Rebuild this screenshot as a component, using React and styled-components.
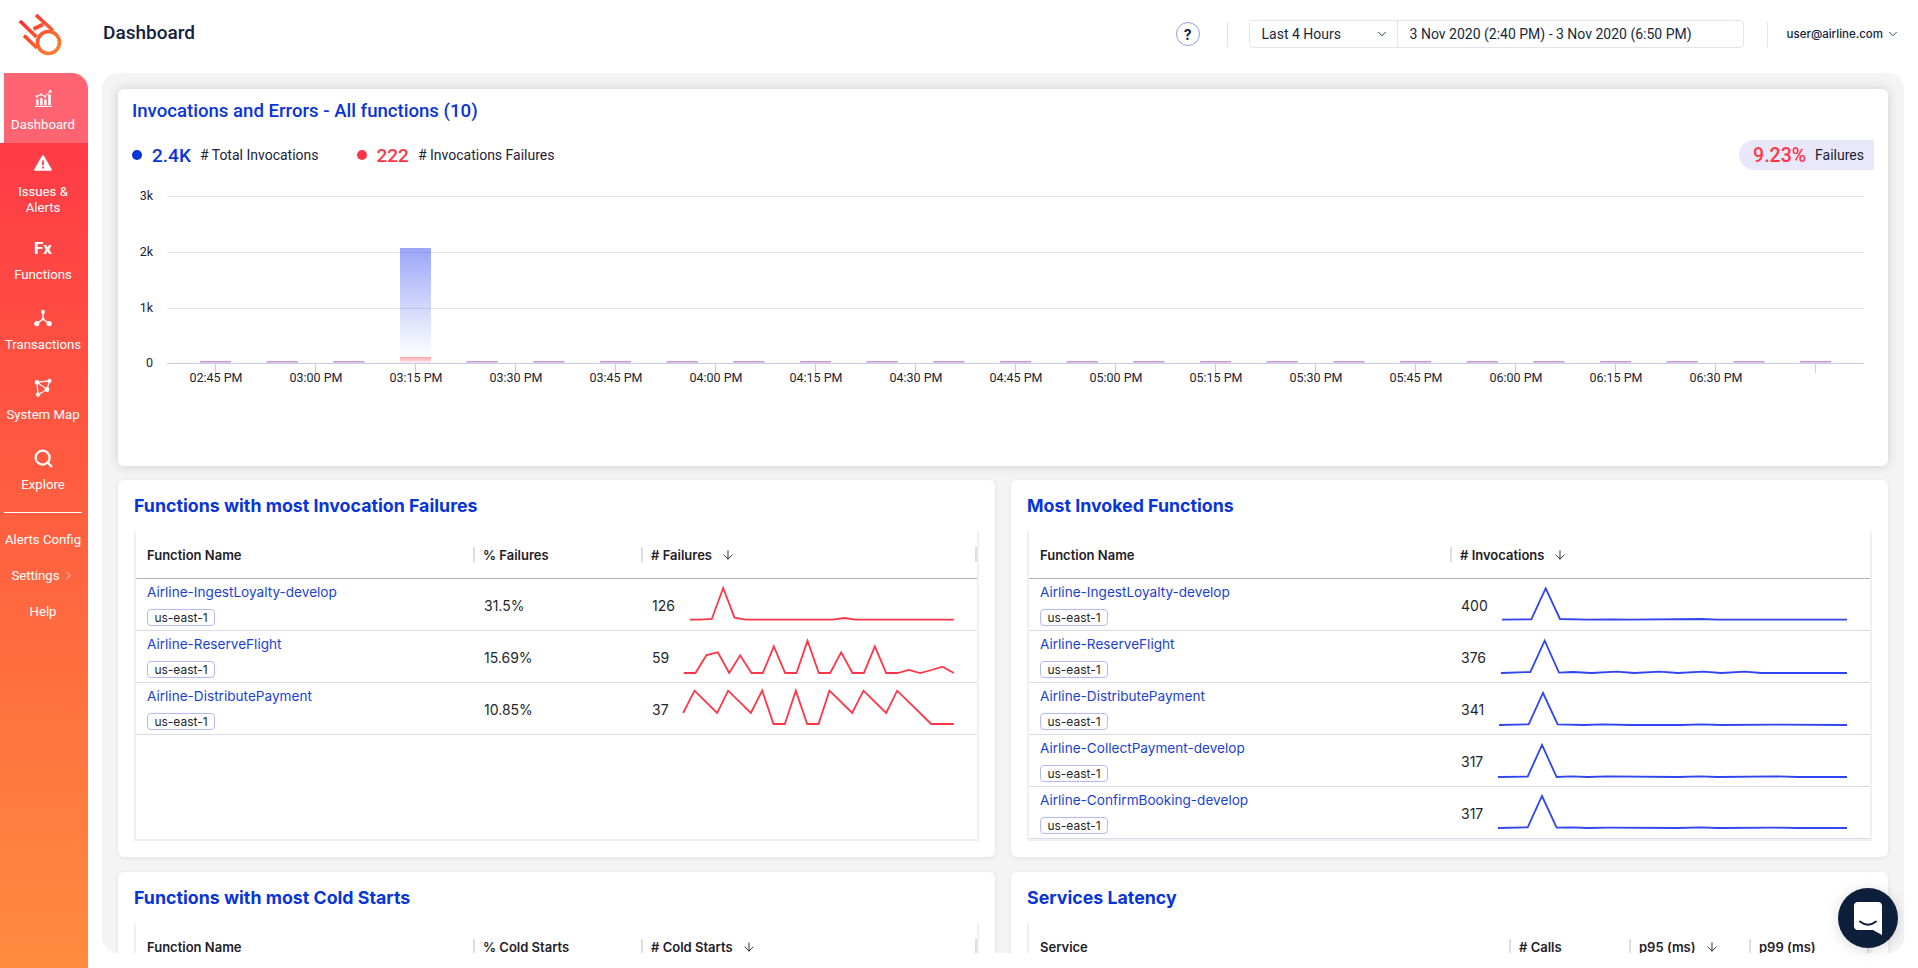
import React from "react";
import styled, { createGlobalStyle } from "styled-components";
import { ArrowDown, ChevronDown, ChevronRight, Search } from "lucide-react";

const display = `Roboto, "Noto Sans", sans-serif`;
const body = `Inter, "Noto Sans", sans-serif`;
const BLUE = "#0a35d6";
const RED = "#ff3648";

const GlobalStyle = createGlobalStyle`
  html, body {
    margin: 0;
    height: 100%;
    overflow: hidden;
    background: #fff;
    font-family: ${body};
  }
  * { box-sizing: border-box; }
`;

const Page = styled.div`
  display: flex;
  flex-direction: column;
  height: 100vh;
`;

const Header = styled.header`
  display: flex;
  align-items: center;
  flex: 0 0 73px;
  padding: 0 18px 5px 0;
`;

const LogoBox = styled.div`
  align-self: flex-start;
  width: 103px;
  height: 68px;
  flex: none;
`;

const PageTitle = styled.h1`
  flex: 1;
  margin: 0 0 4px;
  font: 500 19px ${display};
  color: #10223f;
`;

const HelpButton = styled.div`
  width: 24px;
  height: 24px;
  margin-right: 27px;
  border: 1px solid #8ea0d8;
  border-radius: 50%;
  display: flex;
  align-items: center;
  justify-content: center;
  font-size: 14px;
  font-weight: 700;
  color: #10223f;
`;

const VLine = styled.div`
  width: 1px;
  height: 25px;
  background: #e3e4ea;
`;

const RangeBox = styled.div`
  display: flex;
  width: 495px;
  height: 28px;
  margin: 0 23px 0 21px;
  border: 1px solid #e4e5ec;
  border-radius: 4px;
  font: 400 14px ${display};
  color: #15283d;
`;

const RangeSelect = styled.div`
  display: flex;
  align-items: center;
  justify-content: space-between;
  width: 148px;
  padding: 0 8px 0 12px;
  border-right: 1px solid #e4e5ec;
`;

const RangeDates = styled.div`
  display: flex;
  align-items: center;
  padding-left: 12px;
`;

const UserMenu = styled.div`
  display: flex;
  align-items: center;
  gap: 3px;
  margin-left: 19px;
  font-size: 11.5px;
  font-weight: 500;
  color: #10223f;
`;

const Body = styled.div`
  display: flex;
  flex: 1;
  min-height: 0;
`;

const Sidebar = styled.nav`
  display: flex;
  flex-direction: column;
  flex: 0 0 88px;
`;

const ActiveItem = styled.div`
  flex: 0 0 70px;
  margin-left: 4px;
  padding: 13px 6px 0 0;
  border-top-right-radius: 16px;
  background: #ff6472;
  display: flex;
  flex-direction: column;
  align-items: center;
`;

const SideRest = styled.div`
  flex: 1;
  padding-right: 2px;
  background: linear-gradient(180deg, #ff3b46 0%, #ff5b40 40%, #ff8c3e 100%);
`;

const NavItem = styled.div`
  height: ${(p) => p.$h || 70}px;
  padding-top: ${(p) => p.$top || 13}px;
  display: flex;
  flex-direction: column;
  align-items: center;
`;

const IconBox = styled.div`
  height: 24px;
  display: flex;
  align-items: center;
  justify-content: center;
  color: #fff;
`;

const FxGlyph = styled.span`
  font: 700 17px ${display};
`;

const NavLabel = styled.div`
  margin-top: ${(p) => p.$gap || 7}px;
  font: 400 13.2px/15.5px ${display};
  color: #fff;
  text-align: center;
  white-space: pre-line;
`;

const SideRule = styled.div`
  height: 1px;
  margin: 9px 4px 8px 4px;
  background: #fff;
`;

const SideLink = styled.div`
  height: 36px;
  display: flex;
  align-items: center;
  justify-content: center;
  gap: 2px;
  font: 400 13.2px ${display};
  color: #fff;
`;

const MainWrap = styled.main`
  flex: 1;
  min-width: 0;
  padding: 0 14px 15px;
`;

const Panel = styled.div`
  height: 100%;
  padding: 16px;
  overflow: hidden;
  border-radius: 16px;
  background: #f4f4f5;
`;

const Card = styled.section`
  height: 377px;
  border-radius: 6px;
  background: #fff;
  box-shadow: ${(p) => (p.$strong ? "0 0 12px rgba(0,0,0,.16)" : "0 1px 5px rgba(20,30,60,.08)")};
`;

const ChartTitle = styled.h2`
  margin: 0;
  padding: 11px 14px 0;
  font: 500 18.6px/22px ${display};
  color: ${BLUE};
`;

const LegendRow = styled.div`
  display: flex;
  align-items: center;
  height: 32px;
  margin-top: 17px;
  padding-left: 14px;
  padding-right: 14px;
`;

const Dot = styled.span`
  width: 10px;
  height: 10px;
  margin-right: 10px;
  border-radius: 50%;
  background: ${(p) => p.$color};
`;

const LegendValue = styled.span`
  margin-right: 9px;
  font: 500 19px ${display};
  color: ${(p) => p.$color};
`;

const LegendLabel = styled.span`
  margin-right: ${(p) => (p.$flush ? 0 : 38)}px;
  font: 400 14px ${display};
  color: #1b2238;
`;

const FailBadge = styled.div`
  display: flex;
  align-items: center;
  gap: 9px;
  height: 30px;
  margin-left: auto;
  padding: 0 10px 0 14px;
  border-radius: 15px 0 0 15px;
  background: #e8e8fa;
`;

const FailValue = styled.span`
  font: 500 19.5px ${display};
  color: ${RED};
`;

const ChartSvg = styled.svg`
  display: block;
  width: 100%;
  height: 225px;
  text {
    font: 400 12.5px ${display};
    fill: #1c2233;
  }
`;

const TwoCols = styled.div`
  display: grid;
  grid-template-columns: 877px 877px;
  gap: 15px 16px;
  margin-top: 14px;
`;

const TableTitle = styled.h3`
  margin: 0;
  padding: 15px 16px 0;
  font: 700 17.8px/22px ${body};
  color: ${BLUE};
`;

const Table = styled.div`
  height: 310px;
  margin: 14px 16px 0;
  border-left: 2px solid #f0f0f2;
  border-right: 2px solid #f0f0f2;
  border-bottom: 2px solid #f0f0f2;
`;

const HeadRow = styled.div`
  display: grid;
  grid-template-columns: ${(p) => p.$cols};
  align-items: center;
  height: 48px;
  border-bottom: 1px solid #b0b1ba;
`;

const HeadCell = styled.div`
  display: flex;
  align-items: center;
  gap: 9px;
  height: 15px;
  padding-left: ${(p) => (p.$first ? 11 : 8)}px;
  border-left: ${(p) => (p.$first ? "none" : "2px solid #dcdde2")};
  border-right: ${(p) => (p.$last ? "2px solid #dcdde2" : "none")};
  font-size: 13px;
  font-weight: 600;
  color: #1f2128;
`;

const Row = styled.div`
  display: grid;
  grid-template-columns: ${(p) => p.$cols};
  height: 52px;
  border-bottom: 1px solid #d8dbe8;
`;

const NameCell = styled.div`
  padding: 4px 0 0 11px;
`;

const FnLink = styled.a`
  display: block;
  font-size: 13.6px;
  line-height: 18px;
  color: #1a3fd6;
`;

const Pill = styled.span`
  display: inline-flex;
  align-items: center;
  justify-content: center;
  width: 68px;
  height: 17px;
  margin-top: 8px;
  border: 1px solid #b3baf5;
  border-radius: 4px;
  font-size: 12px;
  color: #24262d;
`;

const ValueCell = styled.div`
  display: flex;
  align-items: center;
  padding-left: 11px;
  font-size: 14px;
  color: #24262d;
`;

const Count = styled.span`
  flex: 0 0 ${(p) => p.$w}px;
  font-size: 14px;
`;

const SparkSvg = styled.svg`
  display: block;
  flex: none;
  width: ${(p) => p.$w}px;
  height: 52px;
  overflow: visible;
`;

const ChatButton = styled.div`
  position: fixed;
  right: 20px;
  bottom: 20px;
  width: 60px;
  height: 60px;
  border-radius: 50%;
  background: #0e1f3c;
  display: flex;
  align-items: center;
  justify-content: center;
  box-shadow: 0 2px 14px rgba(0, 0, 0, 0.15);
`;

function Logo() {
  return (
    <svg width="68" height="68" viewBox="0 0 68 68" fill="none">
      <defs>
        <linearGradient id="logoGrad" x1="18" y1="14" x2="60" y2="56" gradientUnits="userSpaceOnUse">
          <stop offset="0" stopColor="#ff1f2f" />
          <stop offset="1" stopColor="#ff8a2e" />
        </linearGradient>
      </defs>
      <g stroke="url(#logoGrad)" strokeWidth="3.6">
        <circle cx="48.5" cy="42.5" r="11" />
        <path d="M20 21L36.5 37M36 15L53 30.5M24 35.5L37 48M33.5 29L43 24.5" />
      </g>
    </svg>
  );
}

const DashboardIcon = () => (
  <svg width="17" height="17" viewBox="0 0 17 17" fill="#fff">
    <rect x="0" y="15.8" width="17" height="1.2" />
    <rect x="1.2" y="9.5" width="2.4" height="5.5" />
    <rect x="5.2" y="8" width="2.4" height="7" />
    <rect x="9.2" y="9.5" width="2.4" height="5.5" />
    <rect x="13.2" y="4.5" width="2.6" height="10.5" />
    <path d="M2 6.4L6 4.4L10 6.6L15 1.4" stroke="#fff" strokeWidth="1" fill="none" />
    <circle cx="2" cy="6.4" r="1.2" />
    <circle cx="6" cy="4.4" r="1.2" />
    <circle cx="10" cy="6.6" r="1.2" />
    <circle cx="15.2" cy="1.4" r="1.3" />
  </svg>
);

const WarningIcon = () => (
  <svg width="18" height="16" viewBox="0 0 18 16">
    <path
      fillRule="evenodd"
      fill="#fff"
      d="M9 0.3C9.5 0.3 9.9 0.6 10.1 1L17.7 14.2C18.1 15 17.6 15.8 16.8 15.8H1.2C0.4 15.8 -0.1 15 0.3 14.2L7.9 1C8.1 0.6 8.5 0.3 9 0.3ZM8.1 5.5V10.3H9.9V5.5ZM8.1 11.6V13.4H9.9V11.6Z"
    />
  </svg>
);

const TransactionsIcon = () => (
  <svg width="18" height="18" viewBox="0 0 18 18" fill="#fff" stroke="#fff">
    <path d="M9 3V10M9 10L3 14.5M9 10L15 14.5" strokeWidth="1.4" fill="none" />
    <circle cx="9" cy="2.8" r="2" strokeWidth="0" />
    <circle cx="9" cy="10" r="1.4" strokeWidth="0" />
    <circle cx="2.8" cy="14.6" r="2.6" strokeWidth="0" />
    <circle cx="15.2" cy="14.6" r="2.6" strokeWidth="0" />
  </svg>
);

const SystemMapIcon = () => (
  <svg width="18" height="18" viewBox="0 0 18 18" fill="#fff" stroke="#fff">
    <path d="M3 3.2L15.5 1.8M3 3.2L13 10.5M3 3.2L4 15.8L13 10.5M15.5 1.8L13 10.5" strokeWidth="1.2" fill="none" />
    <circle cx="3" cy="3.2" r="2.3" strokeWidth="0" />
    <circle cx="15.5" cy="1.9" r="2" strokeWidth="0" />
    <circle cx="13" cy="10.5" r="2.4" strokeWidth="0" />
    <circle cx="4" cy="15.6" r="2.2" strokeWidth="0" />
  </svg>
);

const ChatIcon = () => (
  <svg width="28" height="33" viewBox="0 0 28 33">
    <path d="M3.5 0H24.5C26.4 0 28 1.6 28 3.5V33L19 28H3.5C1.6 28 0 26.4 0 24.5V3.5C0 1.6 1.6 0 3.5 0Z" fill="#fff" />
    <path d="M6 19.5C11 23.5 17 23.5 22 19.5" stroke="#0e1f3c" strokeWidth="1.8" fill="none" strokeLinecap="round" />
  </svg>
);

const tickLabels = [
  "02:45 PM", "03:00 PM", "03:15 PM", "03:30 PM", "03:45 PM", "04:00 PM", "04:15 PM", "04:30 PM",
  "04:45 PM", "05:00 PM", "05:15 PM", "05:30 PM", "05:45 PM", "06:00 PM", "06:15 PM", "06:30 PM",
];

function InvocationsChart() {
  const base = 192;
  return (
    <ChartSvg viewBox="0 0 1770 225">
      <defs>
        <linearGradient id="bigBar" x1="0" y1="0" x2="0" y2="1">
          <stop offset="0" stopColor="#3f55f0" stopOpacity=".52" />
          <stop offset="1" stopColor="#3f55f0" stopOpacity="0" />
        </linearGradient>
        <linearGradient id="redBar" x1="0" y1="0" x2="0" y2="1">
          <stop offset="0" stopColor="#ff4a58" stopOpacity=".5" />
          <stop offset="1" stopColor="#ff4a58" stopOpacity=".08" />
        </linearGradient>
      </defs>
      {[[25, "3k"], [81, "2k"], [137, "1k"], [base, "0"]].map(([y, t]) => (
        <g key={t}>
          <line x1="49" x2="1746" y1={y + 0.5} y2={y + 0.5} stroke={t === "0" ? "#c5cbe5" : "#e2e3e7"} />
          <text x="35" y={y + 4} textAnchor="end">{t}</text>
        </g>
      ))}
      {Array.from({ length: 17 }, (_, i) => (
        <g key={i}>
          <line x1={97.5 + i * 100} x2={97.5 + i * 100} y1={base} y2={base + 10} stroke="#c5cbe5" />
          {tickLabels[i] && <text x={98 + i * 100} y={base + 19} textAnchor="middle">{tickLabels[i]}</text>}
        </g>
      ))}
      {Array.from({ length: 25 }, (_, i) =>
        i === 3 ? null : (
          <g key={i}>
            <rect x={82 + i * 66.67} y={base - 2} width="31" height="2" fill="#e0c8e8" />
            <rect x={82 + i * 66.67} y={base - 2} width="31" height="1" fill="#cc93c6" />
          </g>
        )
      )}
      <rect x="282" y="77" width="31" height="108" fill="url(#bigBar)" />
      <rect x="282" y="186" width="31" height="6" fill="url(#redBar)" />
    </ChartSvg>
  );
}

function Spark({ points, color, width, vbw }) {
  return (
    <SparkSvg $w={width} viewBox={`0 0 ${vbw} 156`}>
      <polyline points={points} fill="none" stroke={color} strokeWidth="5.4" strokeLinejoin="miter" />
    </SparkSvg>
  );
}

const failureRows = [
  {
    name: "Airline-IngestLoyalty-develop", pct: "31.5%", count: "126",
    spark: "20,122 52,122 86,120 120,27 154,116 187,122 449,122 483,117 517,122 812,122",
  },
  {
    name: "Airline-ReserveFlight", pct: "15.69%", count: "59",
    spark: "2,126 37,126 70,72 104,64 138,126 171,73 205,126 239,126 272,46 306,126 340,126 373,29 407,126 441,126 474,64 508,126 542,126 575,46 609,126 643,126 677,117 711,126 745,117 778,107 812,126",
  },
  {
    name: "Airline-DistributePayment", pct: "10.85%", count: "37",
    spark: "0,90 34,23 102,90 135,23 203,90 237,23 271,123 305,123 338,23 372,123 406,123 439,23 507,90 541,23 609,90 642,23 744,123 812,123",
  },
];

const invokedRows = [
  {
    name: "Airline-IngestLoyalty-develop", count: "400",
    spark: "12,122 100,121 143,28 186,120 270,122 340,121 400,122 610,120 660,122 1047,122",
  },
  {
    name: "Airline-ReserveFlight", count: "376",
    spark: "9,126 97,123 140,29 183,125 225,123 280,126 355,122 410,126 485,122 540,126 615,122 670,126 740,122 790,126 1047,126",
  },
  {
    name: "Airline-DistributePayment", count: "341",
    spark: "3,126 92,124 135,30 179,124 260,126 310,124 400,126 550,126 610,124 670,126 830,125 1047,126",
  },
  {
    name: "Airline-CollectPayment-develop", count: "317",
    spark: "0,126 89,125 132,30 176,126 220,124 270,126 330,124 540,126 605,124 660,126 830,124 900,126 1047,126",
  },
  {
    name: "Airline-ConfirmBooking-develop", count: "317",
    spark: "0,123 89,121 132,27 176,122 220,121 270,123 330,122 540,123 605,121 660,123 830,122 900,123 1047,123",
  },
];

const LEFT_COLS = "337px 168px 1fr";
const RIGHT_COLS = "421px 1fr";
const LATENCY_COLS = "480px 120px 120px 120px";

const Sorted = ({ children }) => (
  <>
    {children}
    <ArrowDown size={14} strokeWidth={1.6} />
  </>
);

const Function = ({ name }) => (
  <NameCell>
    <FnLink>{name}</FnLink>
    <Pill>us-east-1</Pill>
  </NameCell>
);

export default function App() {
  return (
    <Page>
      <GlobalStyle />
      <Header>
        <LogoBox>
          <Logo />
        </LogoBox>
        <PageTitle>Dashboard</PageTitle>
        <HelpButton>?</HelpButton>
        <VLine />
        <RangeBox>
          <RangeSelect>
            Last 4 Hours
            <ChevronDown size={14} strokeWidth={1.5} />
          </RangeSelect>
          <RangeDates>3 Nov 2020 (2:40 PM) - 3 Nov 2020 (6:50 PM)</RangeDates>
        </RangeBox>
        <VLine />
        <UserMenu>
          user@airline.com
          <ChevronDown size={14} strokeWidth={1.4} />
        </UserMenu>
      </Header>

      <Body>
        <Sidebar>
          <ActiveItem>
            <IconBox><DashboardIcon /></IconBox>
            <NavLabel>Dashboard</NavLabel>
          </ActiveItem>
          <SideRest>
            <NavItem $h={80} $top={8}>
              <IconBox><WarningIcon /></IconBox>
              <NavLabel $gap={9}>{"Issues &\nAlerts"}</NavLabel>
            </NavItem>
            <NavItem>
              <IconBox><FxGlyph>Fx</FxGlyph></IconBox>
              <NavLabel>Functions</NavLabel>
            </NavItem>
            <NavItem>
              <IconBox><TransactionsIcon /></IconBox>
              <NavLabel>Transactions</NavLabel>
            </NavItem>
            <NavItem>
              <IconBox><SystemMapIcon /></IconBox>
              <NavLabel>System Map</NavLabel>
            </NavItem>
            <NavItem>
              <IconBox><Search size={21} strokeWidth={2.5} /></IconBox>
              <NavLabel>Explore</NavLabel>
            </NavItem>
            <SideRule />
            <SideLink>Alerts Config</SideLink>
            <SideLink>
              Settings
              <ChevronRight size={13} strokeWidth={1.5} />
            </SideLink>
            <SideLink>Help</SideLink>
          </SideRest>
        </Sidebar>

        <MainWrap>
          <Panel>
            <Card $strong>
              <ChartTitle>Invocations and Errors - All functions (10)</ChartTitle>
              <LegendRow>
                <Dot $color={BLUE} />
                <LegendValue $color={BLUE}>2.4K</LegendValue>
                <LegendLabel># Total Invocations</LegendLabel>
                <Dot $color={RED} />
                <LegendValue $color={RED}>222</LegendValue>
                <LegendLabel># Invocations Failures</LegendLabel>
                <FailBadge>
                  <FailValue>9.23%</FailValue>
                  <LegendLabel $flush>Failures</LegendLabel>
                </FailBadge>
              </LegendRow>
              <InvocationsChart />
            </Card>

            <TwoCols>
              <Card>
                <TableTitle>Functions with most Invocation Failures</TableTitle>
                <Table>
                  <HeadRow $cols={LEFT_COLS}>
                    <HeadCell $first>Function Name</HeadCell>
                    <HeadCell>% Failures</HeadCell>
                    <HeadCell $last><Sorted># Failures</Sorted></HeadCell>
                  </HeadRow>
                  {failureRows.map((r) => (
                    <Row key={r.name} $cols={LEFT_COLS}>
                      <Function name={r.name} />
                      <ValueCell>{r.pct}</ValueCell>
                      <ValueCell>
                        <Count $w={31}>{r.count}</Count>
                        <Spark points={r.spark} color={RED} width={271} vbw={812} />
                      </ValueCell>
                    </Row>
                  ))}
                </Table>
              </Card>

              <Card>
                <TableTitle>Most Invoked Functions</TableTitle>
                <Table>
                  <HeadRow $cols={RIGHT_COLS}>
                    <HeadCell $first>Function Name</HeadCell>
                    <HeadCell><Sorted># Invocations</Sorted></HeadCell>
                  </HeadRow>
                  {invokedRows.map((r) => (
                    <Row key={r.name} $cols={RIGHT_COLS}>
                      <Function name={r.name} />
                      <ValueCell>
                        <Count $w={36.7}>{r.count}</Count>
                        <Spark points={r.spark} color="#2e45f0" width={349} vbw={1047} />
                      </ValueCell>
                    </Row>
                  ))}
                </Table>
              </Card>

              <Card>
                <TableTitle>Functions with most Cold Starts</TableTitle>
                <Table>
                  <HeadRow $cols={LEFT_COLS}>
                    <HeadCell $first>Function Name</HeadCell>
                    <HeadCell>% Cold Starts</HeadCell>
                    <HeadCell $last><Sorted># Cold Starts</Sorted></HeadCell>
                  </HeadRow>
                </Table>
              </Card>

              <Card>
                <TableTitle>Services Latency</TableTitle>
                <Table>
                  <HeadRow $cols={LATENCY_COLS}>
                    <HeadCell $first>Service</HeadCell>
                    <HeadCell># Calls</HeadCell>
                    <HeadCell><Sorted>p95 (ms)</Sorted></HeadCell>
                    <HeadCell $last>p99 (ms)</HeadCell>
                  </HeadRow>
                </Table>
              </Card>
            </TwoCols>
          </Panel>
        </MainWrap>
      </Body>

      <ChatButton>
        <ChatIcon />
      </ChatButton>
    </Page>
  );
}
